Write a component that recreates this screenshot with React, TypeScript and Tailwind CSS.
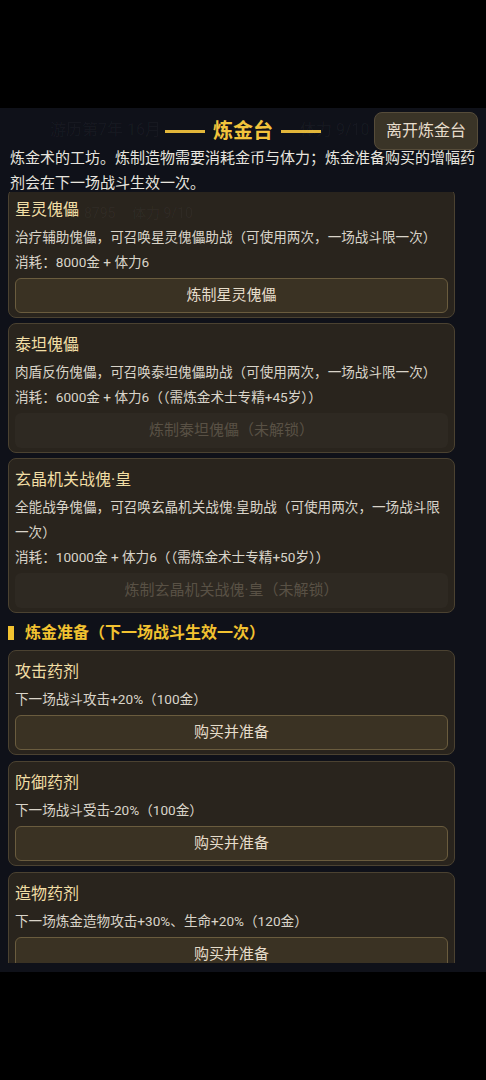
import React from "react";

type Craft = {
  name: string;
  desc: string;
  cost?: string;
  action: string;
  locked?: boolean;
};

const golems: Craft[] = [
  {
    name: "星灵傀儡",
    desc: "治疗辅助傀儡，可召唤星灵傀儡助战（可使用两次，一场战斗限一次）",
    cost: "消耗：8000金 + 体力6",
    action: "炼制星灵傀儡",
  },
  {
    name: "泰坦傀儡",
    desc: "肉盾反伤傀儡，可召唤泰坦傀儡助战（可使用两次，一场战斗限一次）",
    cost: "消耗：6000金 + 体力6（（需炼金术士专精+45岁））",
    action: "炼制泰坦傀儡（未解锁）",
    locked: true,
  },
  {
    name: "玄晶机关战傀·皇",
    desc: "全能战争傀儡，可召唤玄晶机关战傀·皇助战（可使用两次，一场战斗限一次）",
    cost: "消耗：10000金 + 体力6（（需炼金术士专精+50岁））",
    action: "炼制玄晶机关战傀·皇（未解锁）",
    locked: true,
  },
];

const potions: Craft[] = [
  { name: "攻击药剂", desc: "下一场战斗攻击+20%（100金）", action: "购买并准备" },
  { name: "防御药剂", desc: "下一场战斗受击-20%（100金）", action: "购买并准备" },
  {
    name: "造物药剂",
    desc: "下一场炼金造物攻击+30%、生命+20%（120金）",
    action: "购买并准备",
  },
];

function CraftCard({ item }: { item: Craft }) {
  return (
    <div className="flex flex-col rounded-lg border border-[#4b4231] bg-[#29241d] px-[6px] pt-[8px] pb-[4px]">
      <div className="text-[16px] leading-[25px] text-[#f1dea5]">{item.name}</div>
      <div className="mt-[3px] pr-[6px] text-[13.6px] leading-[25px] text-[#d9d4c9]">{item.desc}</div>
      {item.cost && (
        <div className="pr-[6px] text-[13.6px] leading-[25px] text-[#d9d4c9]">{item.cost}</div>
      )}
      {item.locked ? (
        <button className="mt-[3px] h-[35px] rounded-md bg-[#2e2922] text-[15px] text-[#595145]">
          {item.action}
        </button>
      ) : (
        <button className="mt-[3px] h-[35px] rounded-md border border-[#6a5c3e] bg-[#3a3223] text-[15px] text-[#e6ddcb]">
          {item.action}
        </button>
      )}
    </div>
  );
}

export default function App() {
  return (
    <div className="flex h-[1080px] w-[486px] flex-col bg-black font-['Roboto','Noto_Sans_CJK_SC',sans-serif]">
      <div className="h-[108px]" />

      <div className="relative flex h-[864px] flex-col bg-[#0f1119] px-2 pt-1 pb-[9px]">
        <div className="grid h-[38px] grid-cols-[1fr_auto_1fr] items-center">
          <div />
          <div className="flex items-center gap-2">
            <span className="h-[3px] w-10 bg-[#e2b63a]" />
            <h1 className="text-[20px] font-bold leading-none text-[#f2c43c]">炼金台</h1>
            <span className="h-[3px] w-10 bg-[#e2b63a]" />
          </div>
          <button className="h-[38px] justify-self-end rounded-lg border border-[#564c3a] bg-[#3a3427] px-[11px] text-[16px] text-[#e7ddcc]">
            离开炼金台
          </button>
        </div>

        <p className="-mt-1 pl-[2px] text-[15px] leading-[25px] text-[#e7e5df]">
          炼金术的工坊。炼制造物需要消耗金币与体力；炼金准备购买的增幅药剂会在下一场战斗生效一次。
        </p>

        <div className="-mt-[4px] min-h-0 flex-1 overflow-hidden">
          <div className="-mt-1 flex w-[447px] flex-col gap-[5px]">
            {golems.map((g) => (
              <CraftCard key={g.name} item={g} />
            ))}

            <div className="mt-[3px] flex h-6 items-center gap-[11px]">
              <span className="h-[14px] w-[6px] bg-[#f2c230]" />
              <span className="text-[16px] font-bold text-[#f2c230]">炼金准备（下一场战斗生效一次）</span>
            </div>

            <div className="flex flex-col gap-[6px]">
              {potions.map((p) => (
                <CraftCard key={p.name} item={p} />
              ))}
            </div>
          </div>
        </div>

        {/* page behind the modal, faintly showing through */}
        <div className="pointer-events-none absolute inset-0 z-10 text-white/[0.04]">
          <span className="absolute left-[50px] top-[10px] text-[16px]">游历第7年 16月</span>
          <span className="absolute left-[300px] top-[10px] text-[16px]">体力 9/10</span>
          <span className="absolute left-[84px] top-[95px] text-[14px]">8795</span>
          <span className="absolute left-[132px] top-[95px] text-[14px]">体力 9/10</span>
        </div>
      </div>

      <div className="flex-1 bg-black" />
    </div>
  );
}
